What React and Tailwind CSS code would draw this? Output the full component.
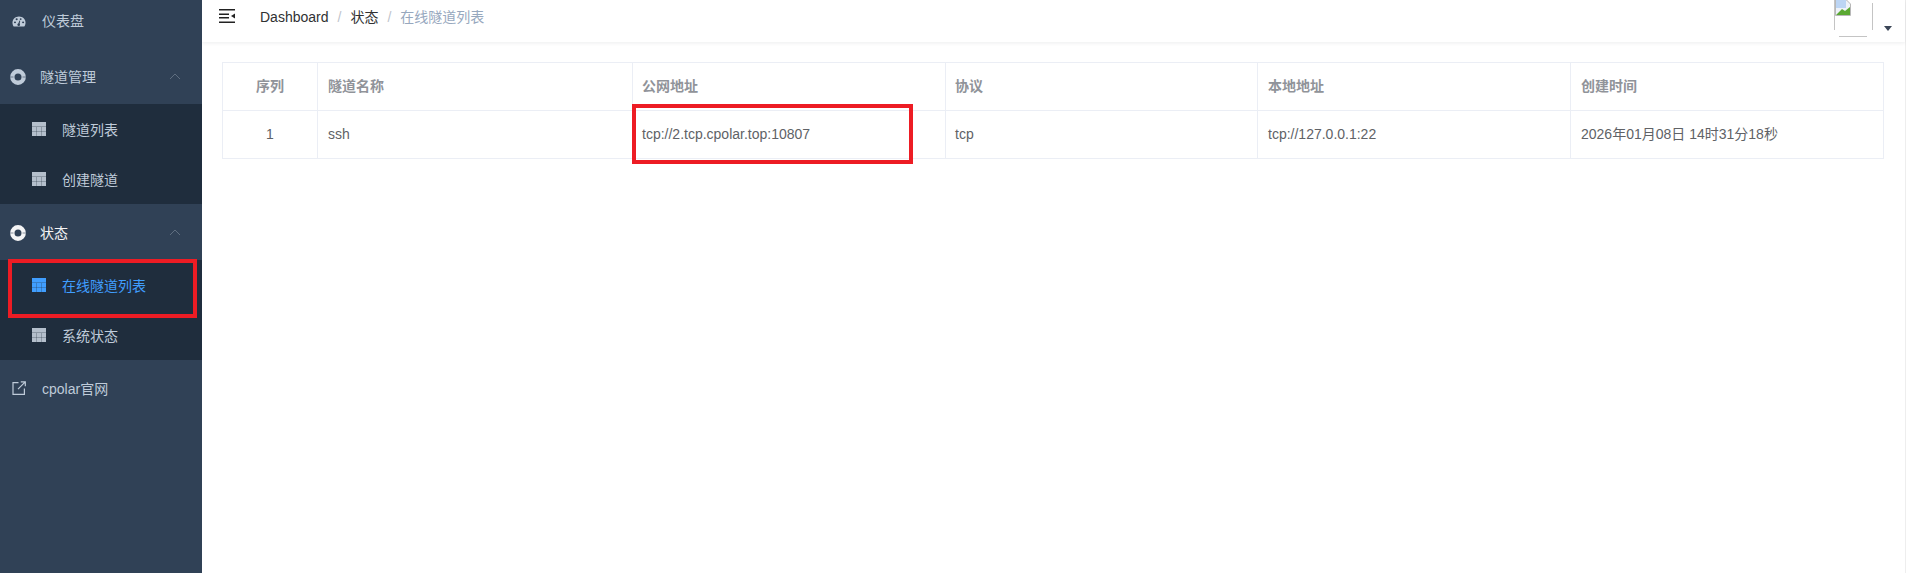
const FONT = "font-['Liberation_Sans','Noto_Sans_CJK_SC',sans-serif]";

function Gauge() {
  return (
    <svg width="14" height="11" viewBox="0 0 15 13" preserveAspectRatio="none" className="shrink-0">
      <path d="M7.5 0.5C3.4 0.5 0.5 3.8 0.5 8c0 1.8.5 3.300 1.300 4.500h11.400c.8-1.200 1.300-2.700 1.300-4.500 0-4.200-2.900-7.500-7-7.500z" fill="#bfcbd9" />
      <circle cx="3.200" cy="7.500" r="1.100" fill="#304156" />
      <circle cx="5" cy="3.900" r="1.100" fill="#304156" />
      <circle cx="9.300" cy="3.600" r="1" fill="#304156" />
      <circle cx="11.900" cy="7.500" r="1.100" fill="#304156" />
      <path d="M6.200 10.500L8 5.200l.8.300L7.800 10.800z" fill="#304156" />
      <circle cx="7.200" cy="10.300" r="1.400" fill="#304156" />
    </svg>
  );
}

function Ring({ color }) {
  return (
    <svg width="16" height="16" viewBox="0 0 16 16" className="mt-0.5 shrink-0">
      <circle cx="8" cy="8" r="5.700" fill="none" stroke={color} strokeWidth="4.400" />
      <path d="M0 8h3.500M12.500 8H16" stroke="#304156" strokeWidth="1" opacity="0.55" />
    </svg>
  );
}

function Grid({ color }) {
  return (
    <svg width="14" height="14" viewBox="0 0 14 14" className="shrink-0">
      <rect x="0" y="0" width="14" height="14" fill={color} />
      <rect x="0" y="4" width="14" height="1" fill="#1f2d3d" opacity="0.28" />
      <rect x="0" y="9" width="14" height="1" fill="#1f2d3d" opacity="0.28" />
      <rect x="4" y="5" width="1" height="9" fill="#1f2d3d" opacity="0.28" />
      <rect x="9" y="5" width="1" height="9" fill="#1f2d3d" opacity="0.28" />
    </svg>
  );
}

function External() {
  return (
    <svg width="14" height="14" viewBox="0 0 14 14" fill="none" stroke="#bfcbd9" strokeWidth="1.200" className="shrink-0">
      <path d="M6.500 1.600H1v11.800h11.400V7.500" />
      <path d="M6 8.200L13 1.200M8.800 0.800h4.500v4.500" />
    </svg>
  );
}

function Chevron() {
  return (
    <svg width="12" height="7" viewBox="0 0 12 7" fill="none" stroke="#5f6e80" strokeWidth="1" className="shrink-0">
      <path d="M1 6l5-5 5 5" />
    </svg>
  );
}

function Hamburger() {
  return (
    <svg width="16" height="14" viewBox="0 0 16 14" className="shrink-0">
      <rect x="0" y="0" width="16" height="1.500" fill="#222" />
      <rect x="0" y="4.500" width="10" height="1.500" fill="#222" />
      <rect x="0" y="8" width="10" height="1.500" fill="#222" />
      <rect x="0" y="12.500" width="16" height="1.500" fill="#222" />
      <path d="M12 7l4-2.600v5.200z" fill="#222" />
    </svg>
  );
}

function Avatar() {
  return (
    <svg width="40" height="37" viewBox="0 0 40 37" fill="none" className="shrink-0">
      <path d="M0.500 0v30M38.500 3v27" stroke="#c4c4c4" />
      <path d="M5 36.500h28" stroke="#c4c4c4" />
      <path d="M1.500 0h11l4 4v11.500H1.500z" fill="#eef2f8" stroke="#b8b8b8" />
      <path d="M2 0h10v8H2z" fill="#bcd5f4" />
      <path d="M2 15l6-6 3 2 5-4v8z" fill="#5aa832" />
    </svg>
  );
}

function Parent({ label, active }) {
  return (
    <div className="flex h-14 items-center pr-[21px] pl-[10px]">
      <Ring color={active ? "#f4f4f5" : "#bfcbd9"} />
      <span className={"ml-[14px] flex-1 pt-px text-sm " + (active ? "text-[#f4f4f5]" : "text-[#bfcbd9]")}>{label}</span>
      <Chevron />
    </div>
  );
}

function Sub({ label, selected }) {
  return (
    <div className="flex h-[50px] items-center pl-8">
      <Grid color={selected ? "#409eff" : "#b4bfcc"} />
      <span className={"ml-4 pt-0.5 text-sm " + (selected ? "text-[#409eff]" : "text-[#bfcbd9]")}>{label}</span>
    </div>
  );
}

const HEAD = [
  { t: "公网地址", p: "pl-[9px]" },
  { t: "协议", p: "pl-[9px]" },
  { t: "本地地址", p: "pl-[10px]" },
  { t: "创建时间", p: "pl-[10px]" },
];
const ROW = ["tcp://2.tcp.cpolar.top:10807", "tcp", "tcp://127.0.0.1:22", "2026年01月08日 14时31分18秒"];
const GRID = "grid grid-cols-[95px_315px_313px_312px_313px_1fr]";

export default function App() {
  return (
    <div className={"flex h-[573px] w-full overflow-hidden bg-white " + FONT}>
      <aside className="relative h-full w-[202px] shrink-0 bg-[#304156]">
        <div className="flex h-12 items-center pb-1.5 pl-3">
          <Gauge />
          <span className="ml-4 text-sm text-[#bfcbd9]">仪表盘</span>
        </div>
        <Parent label="隧道管理" />
        <div className="bg-[#1f2d3d]">
          <Sub label="隧道列表" />
          <Sub label="创建隧道" />
        </div>
        <Parent label="状态" active />
        <div className="relative bg-[#1f2d3d]">
          <Sub label="在线隧道列表" selected />
          <Sub label="系统状态" />
          <div className="pointer-events-none absolute top-[-1px] left-2 h-[59px] w-[189px] border-4 border-[#ed1c24]" />
        </div>
        <div className="flex h-14 items-center pl-3">
          <External />
          <span className="ml-4 pt-px text-sm text-[#bfcbd9]">cpolar官网</span>
        </div>
      </aside>

      <main className="flex min-w-0 flex-1 flex-col border-r border-[#eeeeee]">
        <header className="flex h-[42px] items-start shadow-[0_1px_4px_rgba(0,21,41,0.08)]">
          <div className="mt-[9px] ml-[17px] flex">
            <Hamburger />
          </div>
          <nav className="mt-2 ml-[25px] flex text-sm leading-[19px]">
            <span className="text-[#303133]">Dashboard</span>
            <span className="mx-[9px] text-[#c0c4cc]">/</span>
            <span className="text-[#303133]">状态</span>
            <span className="mx-[9px] text-[#c0c4cc]">/</span>
            <span className="text-[#97a8be]">在线隧道列表</span>
          </nav>
          <div className="ml-auto flex items-start">
            <Avatar />
            <svg width="8" height="5" viewBox="0 0 8 5" className="mt-[26px] mr-[13px] ml-[10px]">
              <path d="M0 0h8L4 5z" fill="#3b4657" />
            </svg>
          </div>
        </header>

        <section className="relative mt-5 mr-[21px] ml-5 text-sm">
          <div className="border border-b-0 border-[#ebeef5]">
            <div className={GRID + " h-12 border-b border-[#ebeef5] font-bold text-[#909399]"}>
              <div className="flex items-center justify-center border-r border-[#ebeef5] pb-0.5">序列</div>
              <div className="flex items-center border-r border-[#ebeef5] pb-0.5 pl-[10px]">隧道名称</div>
              {HEAD.map((h, i) => (
                <div key={h.t} className={"flex items-center pb-0.5 " + h.p + (i < 3 ? " border-r border-[#ebeef5]" : "")}>{h.t}</div>
              ))}
            </div>
            <div className={GRID + " h-12 border-b border-[#ebeef5] text-[#606266]"}>
              <div className="flex items-center justify-center border-r border-[#ebeef5] pb-0.5">1</div>
              <div className="flex items-center border-r border-[#ebeef5] pb-0.5 pl-[10px]">ssh</div>
              {ROW.map((c, i) => (
                <div key={c} className={"flex items-center pb-0.5 " + HEAD[i].p + (i < 3 ? " border-r border-[#ebeef5]" : "")}>{c}</div>
              ))}
            </div>
          </div>
          <div className="pointer-events-none absolute top-[42px] left-[410px] h-[60px] w-[281px] border-4 border-[#ed1c24]" />
        </section>
      </main>
    </div>
  );
}
